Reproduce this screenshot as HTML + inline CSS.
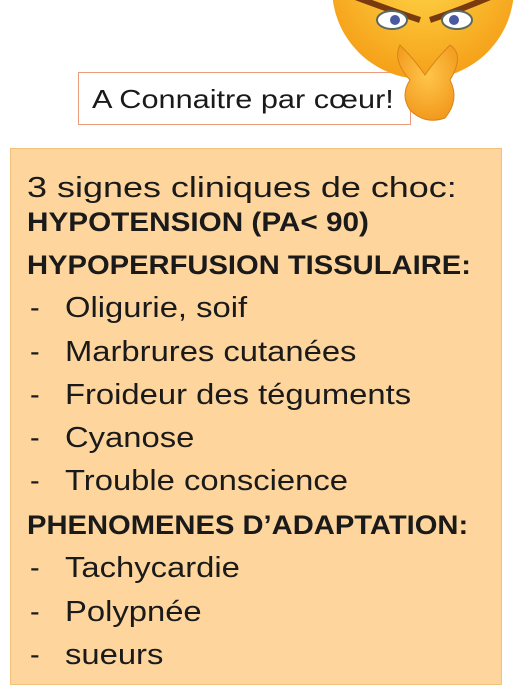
<!DOCTYPE html>
<html><head><style>
body{margin:0;width:518px;height:697px;background:#fff;position:relative;overflow:hidden;font-family:"Liberation Sans",sans-serif;color:#1a1a1a}
.lab{position:absolute;left:78px;top:72px;width:333px;height:53px;border:1.5px solid #eb9c7c;box-sizing:border-box;background:#fff}
.lt{position:absolute;left:92px;top:84px;font-size:26px;white-space:nowrap;transform:scaleX(1.18);transform-origin:left}
.box{position:absolute;left:10px;top:148px;width:492px;height:537px;background:#fdd59d;border:1px solid #f0c27a;box-sizing:border-box}
.l{position:absolute;left:27px;font-size:29px;white-space:nowrap;transform:scaleX(1.13);transform-origin:left}
.b{font-weight:bold;font-size:27px;transform:scaleX(1.1)}
.d{position:absolute;left:30px;font-size:29px}
</style></head><body>
<div class="lab"></div>
<div class="lt">A Connaitre par cœur!</div>
<svg style="position:absolute;left:320px;top:0" width="198" height="130">
<defs><radialGradient id="g" cx="0.5" cy="0.4" r="0.6"><stop offset="0" stop-color="#ffd84a"/><stop offset="1" stop-color="#f5a018"/></radialGradient>
<radialGradient id="h" cx="0.5" cy="0.4" r="0.6"><stop offset="0" stop-color="#ffc64a"/><stop offset="1" stop-color="#f29a1e"/></radialGradient></defs>
<circle cx="103" cy="-12" r="91" fill="url(#g)"/>
<path d="M30 -5 Q70 10 100 20 M110 20 Q140 10 175 -5" stroke="#7a3a10" stroke-width="6" fill="none"/>
<ellipse cx="72" cy="20" rx="15" ry="9" fill="#fff" stroke="#5a6a60" stroke-width="2"/>
<ellipse cx="137" cy="20" rx="15" ry="9" fill="#fff" stroke="#5a6a60" stroke-width="2"/>
<circle cx="75" cy="20" r="5" fill="#4a5aa0"/><circle cx="134" cy="20" r="5" fill="#4a5aa0"/>
<path d="M80 45 Q95 60 105 75 Q115 60 130 45 Q145 55 130 80 Q140 100 125 118 Q105 125 90 110 Q80 95 90 80 Q72 60 80 45Z" fill="url(#h)" stroke="#d88418" stroke-width="1"/>
</svg>
<div class="box"></div>
<div class="l" style="top:172px;transform:scaleX(1.24)">3 signes cliniques de choc:</div>
<div class="l b" style="top:207px">HYPOTENSION (PA&lt; 90)</div>
<div class="l b" style="top:250px;transform:scaleX(1.08)">HYPOPERFUSION TISSULAIRE:</div>
<div class="d" style="top:292px">-</div><div class="l" style="left:65px;top:292px">Oligurie, soif</div>
<div class="d" style="top:336px">-</div><div class="l" style="left:65px;top:336px">Marbrures cutanées</div>
<div class="d" style="top:379px">-</div><div class="l" style="left:65px;top:379px">Froideur des téguments</div>
<div class="d" style="top:422px">-</div><div class="l" style="left:65px;top:422px">Cyanose</div>
<div class="d" style="top:465px">-</div><div class="l" style="left:65px;top:465px">Trouble conscience</div>
<div class="l b" style="top:510px;transform:scaleX(1.08)">PHENOMENES D’ADAPTATION:</div>
<div class="d" style="top:552px">-</div><div class="l" style="left:65px;top:552px">Tachycardie</div>
<div class="d" style="top:596px">-</div><div class="l" style="left:65px;top:596px">Polypnée</div>
<div class="d" style="top:639px">-</div><div class="l" style="left:65px;top:639px">sueurs</div>
</body></html>
